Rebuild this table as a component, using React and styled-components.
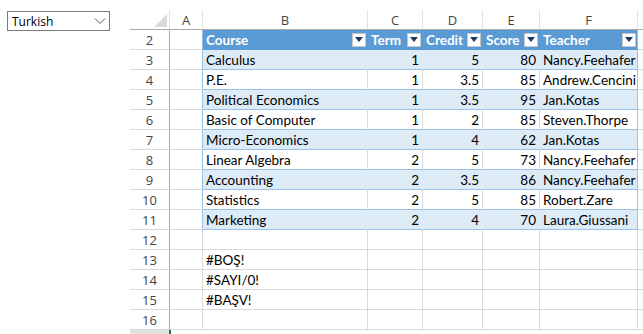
import React from "react";
import styled, { createGlobalStyle, css } from "styled-components";

const GlobalStyle = createGlobalStyle`
  html, body {
    margin: 0;
    padding: 0;
    background: #ffffff;
    overflow: hidden;
  }
  body {
    font-family: "Lato", "Open Sans", sans-serif;
  }
`;

const Page = styled.div`
  display: flex;
  align-items: flex-start;
  width: 643px;
  height: 334px;
  overflow: hidden;
`;

const Select = styled.div`
  flex: none;
  margin: 11px 0 0 7px;
  width: 103px;
  height: 20px;
  box-sizing: border-box;
  border: 1px solid #7a7a7a;
  display: flex;
  align-items: center;
  justify-content: space-between;
  padding: 0 3px 0 4px;
  font-family: "Open Sans", "Noto Sans", sans-serif;
  font-size: 12px;
  color: #000;
`;

const Sheet = styled.div`
  flex: none;
  margin: 10px 0 0 20px;
  display: grid;
  grid-template-columns: 40px 33px 165px 55px 60px 57px 98px 20px;
  grid-auto-rows: 20px;
  font-size: 13.5px;
  color: #000;
`;

const Cell = styled.div`
  box-sizing: border-box;
  display: flex;
  align-items: center;
  padding: 0 3px;
  white-space: nowrap;
  overflow: hidden;
  border-right: 1px solid #d9d9d9;
  border-bottom: 1px solid #d9d9d9;
  justify-content: ${(p) => (p.$num ? "flex-end" : "flex-start")};
  ${(p) =>
    p.$band &&
    css`
      background: #ddebf7;
      border-right-color: #ddebf7;
    `}
  ${(p) =>
    p.$inTable &&
    css`
      border-bottom-color: #9bc2e6;
    `}
  ${(p) =>
    p.$edge &&
    css`
      border-right-color: #9bc2e6;
    `}
`;

const HeadCell = styled.div`
  box-sizing: border-box;
  display: flex;
  align-items: center;
  justify-content: space-between;
  padding: 0 1px 0 3px;
  background: #5b9bd5;
  color: #fff;
  font-weight: 700;
  border-right: 1px solid ${(p) => (p.$edge ? "#9bc2e6" : "#5b9bd5")};
  border-bottom: 1px solid #5b9bd5;
  white-space: nowrap;
  overflow: hidden;
`;

const FilterButton = styled.span`
  flex: none;
  width: 14px;
  height: 14px;
  box-sizing: border-box;
  background: #fff;
  border: 1px solid #c6c6c6;
  display: flex;
  align-items: center;
  justify-content: center;
`;

const ColHeader = styled.div`
  box-sizing: border-box;
  display: flex;
  align-items: center;
  justify-content: center;
  font-family: "Open Sans", "Noto Sans", sans-serif;
  font-size: 13px;
  color: #444;
  background: #fff;
  border-right: 1px solid #e1e1e1;
  border-bottom: 1px solid #ababab;
`;

const RowHeader = styled.div`
  box-sizing: border-box;
  display: flex;
  align-items: center;
  justify-content: center;
  font-family: "Open Sans", "Noto Sans", sans-serif;
  font-size: 13px;
  color: #444;
  background: ${(p) => (p.$active ? "#e1e1e1" : "#fff")};
  border-right: 1px solid #ababab;
  border-bottom: 1px solid #d9d9d9;
`;

const ActiveCell = styled.div`
  box-sizing: border-box;
  border-left: 2px solid #217346;
  margin-left: -1px;
`;

const Corner = styled(ColHeader)`
  justify-content: flex-end;
  align-items: flex-end;
  padding: 0 2px 2px 0;
`;

const rows = [
  ["Calculus", 1, 5, 80, "Nancy.Feehafer"],
  ["P.E.", 1, 3.5, 85, "Andrew.Cencini"],
  ["Political Economics", 1, 3.5, 95, "Jan.Kotas"],
  ["Basic of Computer", 1, 2, 85, "Steven.Thorpe"],
  ["Micro-Economics", 1, 4, 62, "Jan.Kotas"],
  ["Linear Algebra", 2, 5, 73, "Nancy.Feehafer"],
  ["Accounting", 2, 3.5, 86, "Nancy.Feehafer"],
  ["Statistics", 2, 5, 85, "Robert.Zare"],
  ["Marketing", 2, 4, 70, "Laura.Giussani"],
];

const headers = ["Course", "Term", "Credit", "Score", "Teacher"];
const errors = ["", "#BOŞ!", "#SAYI/0!", "#BAŞV!", ""];

function Filter() {
  return (
    <FilterButton>
      <svg width="8" height="5" viewBox="0 0 8 5">
        <path d="M0 0h8L4 5z" fill="#1f3864" />
      </svg>
    </FilterButton>
  );
}

function App() {
  return (
    <Page>
      <GlobalStyle />
      <Select>
        Turkish
        <svg width="12" height="8" viewBox="0 0 12 8">
          <path d="M1 1.5l5 5 5-5" fill="none" stroke="#555" strokeWidth="1" />
        </svg>
      </Select>
      <Sheet>
        <Corner>
          <svg width="13" height="13" viewBox="0 0 13 13">
            <path d="M13 0v13H0z" fill="#dadada" />
          </svg>
        </Corner>
        {["A", "B", "C", "D", "E", "F", ""].map((c, i) => (
          <ColHeader key={i}>{c}</ColHeader>
        ))}

        <RowHeader>2</RowHeader>
        <Cell $edge />
        {headers.map((h, i) => (
          <HeadCell key={h} $edge={i === headers.length - 1}>
            {h}
            <Filter />
          </HeadCell>
        ))}
        <Cell />

        {rows.map((r, i) => {
          const band = i % 2 === 0;
          return (
            <React.Fragment key={i}>
              <RowHeader>{i + 3}</RowHeader>
              <Cell $edge />
              <Cell $band={band} $inTable>{r[0]}</Cell>
              <Cell $band={band} $inTable $num>{r[1]}</Cell>
              <Cell $band={band} $inTable $num>{r[2]}</Cell>
              <Cell $band={band} $inTable $num>{r[3]}</Cell>
              <Cell $band={band} $inTable $edge>{r[4]}</Cell>
              <Cell />
            </React.Fragment>
          );
        })}

        {errors.map((e, i) => (
          <React.Fragment key={i}>
            <RowHeader>{i + 12}</RowHeader>
            <Cell />
            <Cell>{e}</Cell>
            <Cell />
            <Cell />
            <Cell />
            <Cell />
            <Cell />
          </React.Fragment>
        ))}

        <RowHeader $active />
        <ActiveCell />
      </Sheet>
    </Page>
  );
}

export default App;
